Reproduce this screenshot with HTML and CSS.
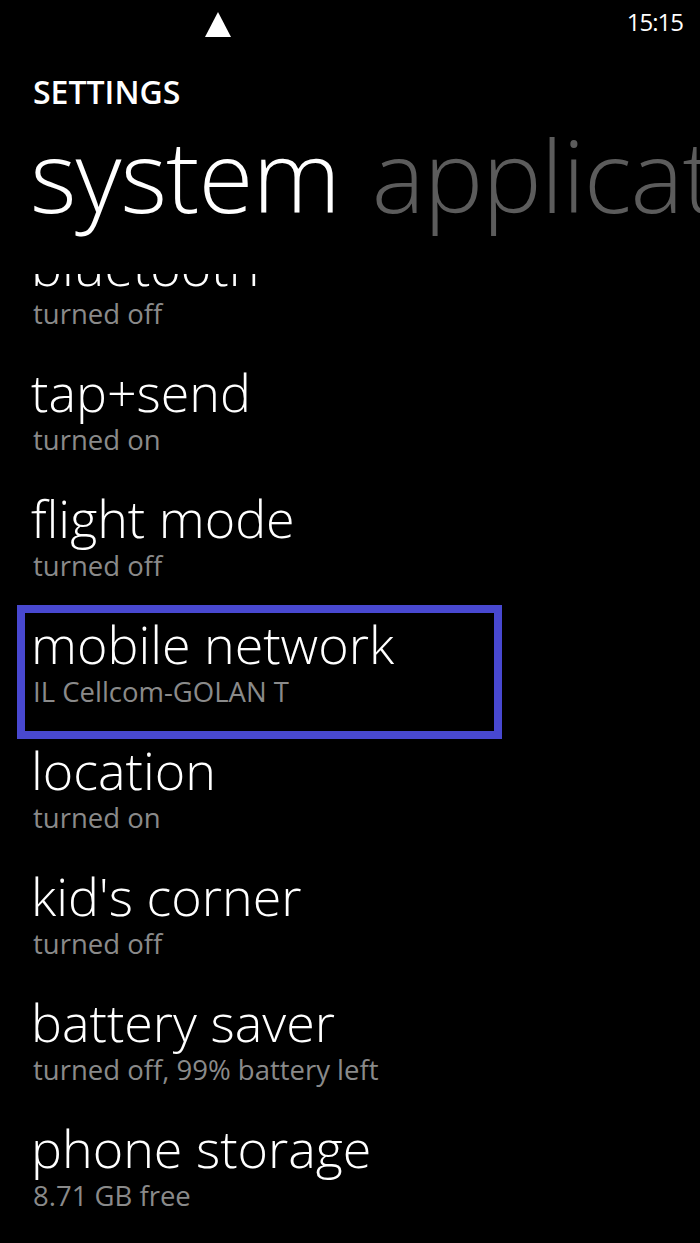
FILE: index.html
```html
<!DOCTYPE html>
<html lang="en">

<head>
    <meta charset="UTF-8">
    <meta name="viewport" content="width=device-width, initial-scale=1.0">
    <title>Settings - system</title>
    <link rel="stylesheet" href="styles.css">
</head>

<body>
    <div class="phone">
        <div class="status-bar">
            <svg class="signal" width="26" height="25" viewBox="0 0 26 25">
                <polygon points="13,0 26,25 0,25" fill="#fff" />
            </svg>
            <span class="clock">15:15</span>
        </div>

        <div class="app-title">SETTINGS</div>

        <div class="pivot">
            <span class="pivot-item active">system</span>
            <span class="pivot-item">applications</span>
        </div>

        <div class="list-viewport">
            <ul class="settings-list">
                <li class="setting">
                    <div class="setting-name">bluetooth</div>
                    <div class="setting-value">turned off</div>
                </li>
                <li class="setting">
                    <div class="setting-name">tap+send</div>
                    <div class="setting-value">turned on</div>
                </li>
                <li class="setting">
                    <div class="setting-name">flight mode</div>
                    <div class="setting-value">turned off</div>
                </li>
                <li class="setting highlighted">
                    <div class="setting-name">mobile network</div>
                    <div class="setting-value">IL Cellcom-GOLAN T</div>
                </li>
                <li class="setting">
                    <div class="setting-name">location</div>
                    <div class="setting-value">turned on</div>
                </li>
                <li class="setting">
                    <div class="setting-name">kid's corner</div>
                    <div class="setting-value">turned off</div>
                </li>
                <li class="setting">
                    <div class="setting-name">battery saver</div>
                    <div class="setting-value">turned off, 99% battery left</div>
                </li>
                <li class="setting">
                    <div class="setting-name">phone storage</div>
                    <div class="setting-value">8.71 GB free</div>
                </li>
            </ul>
        </div>
    </div>
</body>

</html>
```

FILE: styles.css
```css
* {
    margin: 0;
    padding: 0;
    box-sizing: border-box;
}

html,
body {
    background-color: #000;
}

body {
    font-family: "Open Sans", "Noto Sans", sans-serif;
    color: #fff;
}

.phone {
    width: 700px;
    height: 1243px;
    overflow: hidden;
}

.status-bar {
    display: flex;
    align-items: flex-start;
    height: 72px;
    padding-right: 17px;

    .signal {
        margin-left: 205px;
        margin-top: 12px;
    }

    .clock {
        margin-left: auto;
        margin-top: 7px;
        font-size: 24px;
        line-height: 30px;
        letter-spacing: -1px;
    }
}

.app-title {
    padding-left: 33px;
    height: 40px;
    font-size: 32px;
    line-height: 40px;
    font-weight: 600;
}

.pivot {
    display: flex;
    gap: 32px;
    height: 110px;
    margin-top: 7px;
    padding-left: 30px;
    white-space: nowrap;
    font-size: 100px;
    line-height: 110px;
    font-weight: 300;
    letter-spacing: -1px;

    .pivot-item {
        color: #5c5c5c;
    }

    .pivot-item.active {
        color: #fff;
    }
}

.list-viewport {
    margin-top: 45px;
    height: 969px;
    overflow: hidden;
}

.settings-list {
    list-style-type: none;
    margin-top: -36px;
}

.setting {
    position: relative;
    height: 126px;
    padding-left: 31px;

    .setting-name {
        font-size: 52px;
        line-height: 56px;
        font-weight: 350;
        white-space: nowrap;
    }

    .setting-value {
        margin-left: 2px;
        font-size: 27.5px;
        line-height: 39px;
        color: #8a8a8a;
        white-space: nowrap;
    }
}

/* Blue frame drawn over the selected row */
.setting.highlighted::after {
    content: "";
    box-sizing: border-box;
    position: absolute;
    left: 17px;
    top: -11px;
    width: 485px;
    height: 134px;
    border: 8px solid #4848d0;
}
```
